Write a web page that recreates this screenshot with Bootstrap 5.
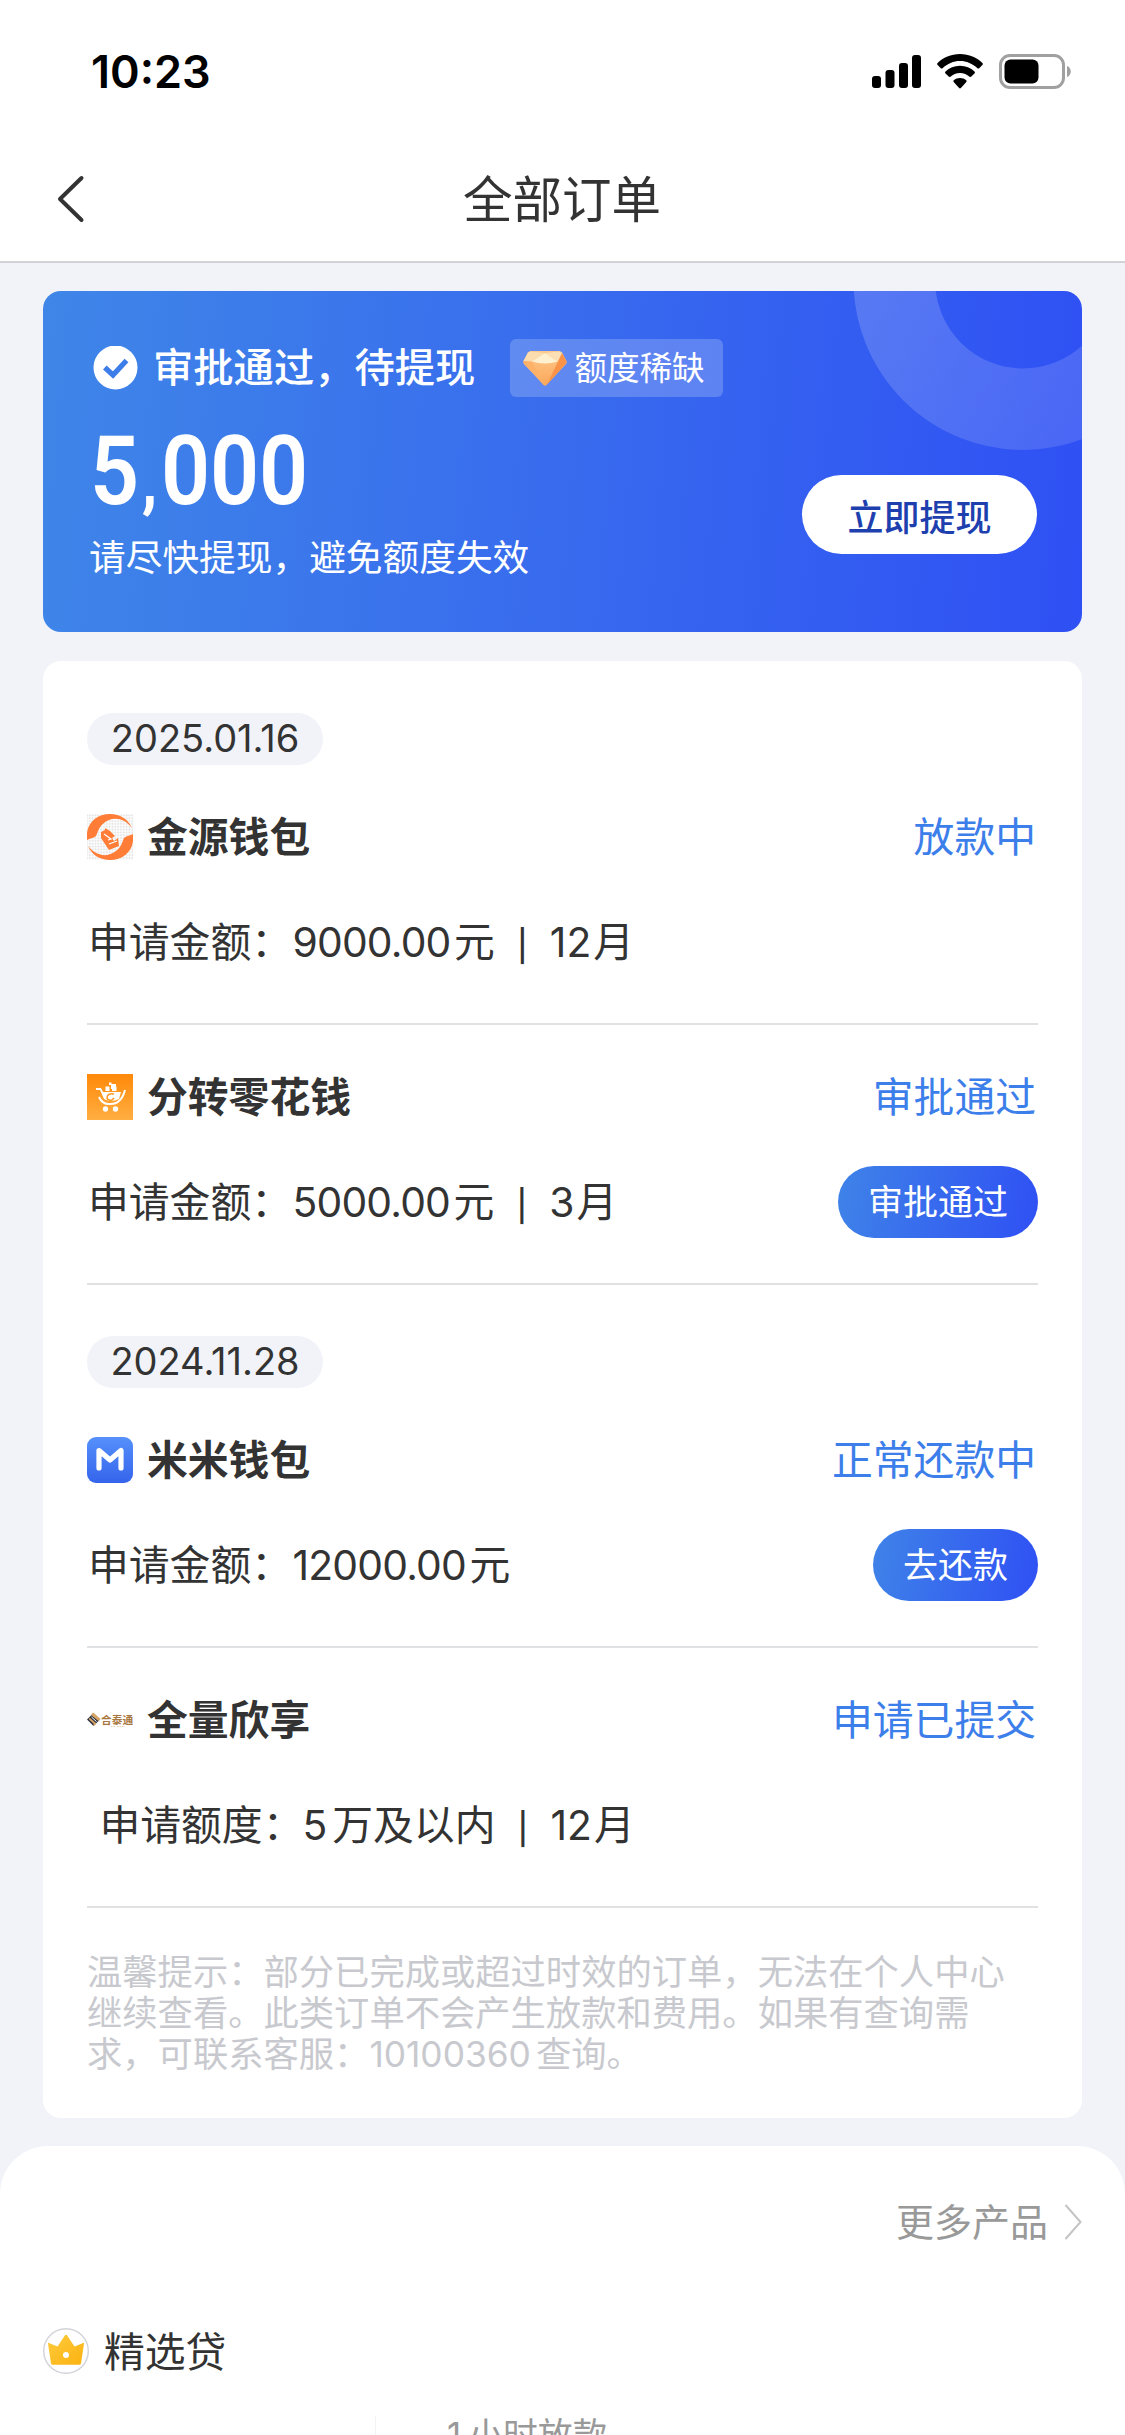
<!DOCTYPE html>
<html lang="zh-CN">
<head>
<meta charset="utf-8">
<meta name="viewport" content="width=device-width, initial-scale=1">
<title>全部订单</title>
<link rel="stylesheet" href="https://cdn.jsdelivr.net/npm/bootstrap@5.3.0/dist/css/bootstrap.min.css">
<style>
  html, body { height: 2435px; overflow: hidden; }
  body { background: #f2f3f8; color: #333; font-family: Inter, "Noto Sans CJK SC", sans-serif; font-size: 40.8px; line-height: 46px; width: 1125px; }
  svg { display: block; flex: none; }
  .statusbar { height: 136px; padding: 7px 53px 0 91px; }
  .clock { font-size: 45px; font-weight: 600; color: #000; }
  .sys { gap: 16px; }
  .topbar { height: 127px; border-bottom: 2px solid #d2d2d7; padding: 0 57px 0 56px; }
  .topbar-title { font-size: 49.5px; font-weight: 400; line-height: 60px; padding-top: 2px; }
  .side { width: 30px; }
  .banner { margin: 28px 43px 0; height: 341px; border-radius: 18px; background: linear-gradient(95deg, #3f86e8 0%, #386bee 50%, #2f50f4 100%); color: #fff; overflow: hidden; padding: 48px 45px 0 50px; font-family: "Noto Sans CJK SC", sans-serif; }
  .ring { top: 0; right: 0; }
  .banner-title { font-size: 40.3px; font-weight: 500; margin: -6px 0 0 15px; }
  .scarce { background: rgba(255,255,255,.2); border-radius: 6px; width: 213px; height: 58px; margin-left: 35px; padding-left: 13px; font-size: 32.6px; gap: 7px; }
  .scarce span { margin-top: -4px; }
  .sum { font-family: Roboto, sans-serif; font-weight: 600; font-size: 95.5px; line-height: 96px; transform: scaleX(.9); transform-origin: left; margin: 26px 0 0 -3px; }
  .comma { font-size: 70px; font-weight: 700; line-height: 1; margin: 0 4px 0 3px; }
  .hint { font-size: 36.7px; line-height: 46px; margin: 13px 0 0 -4px; }
  .withdraw { width: 235px; height: 79px; margin-top: 78px; background: #fff; color: #1e40ae; font-size: 36px; font-weight: 500; line-height: 72px; }
  .orders { margin: 29px 43px 0; height: 1457px; border-radius: 18px; background: #fff; padding: 0 44px; }
  .day { padding-top: 51px; }
  .day:first-child { padding-top: 52px; }
  .pill { width: 236px; height: 52px; background: #f2f3f8; font-size: 38px; line-height: 51px; }
  .order { padding: 49px 0 45px; border-bottom: 2px solid #e0e1e3; }
  .shop { font-weight: 700; margin-left: 14px; }
  .state { color: #3c7eea; padding-right: 2px; }
  .line2 { height: 72px; margin-top: 46px; padding-left: 1px; }
  .amt { letter-spacing: -.8px; margin: 0 3.5px 0 .5px; }
  .few { margin: 0 5px 0 -1px; }
  .mon { margin-right: 2px; }
  .bar { display: inline-block; width: 55px; text-align: center; font-size: 31px; line-height: 30px; font-weight: 500; }
  .act { height: 72px; padding: 0 30px; font-size: 35px; color: #fff; background: linear-gradient(100deg, #3f83e8, #2f50f4); }
  .note { margin: 44px -10px 0 0; font-size: 35.3px; line-height: 41px; color: #c8c9ce; }
  .tel { margin: 0 5px 0 0; }
  .more-panel { margin-top: 28px; height: 289px; background: #fff; border-radius: 48px 48px 0 0; padding: 53px 43px 0; }
  .more { color: #999; font-size: 38px; gap: 16px; }
  .picked { margin-top: 82px; }
  .picked span { margin-left: 15px; padding-top: 2px; }
  .teaser { color: #999; font-size: 34.8px; margin: 41px 0 0 332px; height: 20px; border-left: 1px solid #f3f3f3; padding-left: 71px; line-height: 38px; }
  .teaser span { margin-right: 7px; }
</style>
</head>
<body>
<div class="statusbar bg-white d-flex align-items-center justify-content-between">
  <span class="clock">10:23</span>
  <div class="sys d-flex align-items-center">
    <svg width="49" height="34" viewBox="0 0 49 34"><rect x="0" y="21" width="9" height="12" rx="3"/><rect x="13.500" y="15" width="9" height="18" rx="3"/><rect x="27" y="8" width="9" height="25" rx="3"/><rect x="40" y="0" width="9" height="33" rx="3"/></svg>
    <svg width="46" height="35" viewBox="0 0 46 35"><path d="M23 0C14 0 6 3.500 .6 9.100c-.6.6-.6 1.300 0 1.900l3.200 3.200c.5.500 1.200.5 1.800 0C10.400 9.700 16.500 7 23 7s12.600 2.700 17.400 7.200c.6.5 1.300.5 1.800 0l3.200-3.200c.6-.6.6-1.300 0-1.900C40 3.500 32 0 23 0z"/><path d="M23 11.800c-5.600 0-10.700 2.200-14.500 5.700-.6.5-.6 1.300 0 1.900l3.200 3.200c.5.500 1.200.5 1.800.1 2.500-2.300 5.800-3.700 9.500-3.700s7 1.400 9.500 3.700c.6.400 1.300.4 1.800-.1l3.200-3.200c.6-.6.6-1.400 0-1.900-3.800-3.500-8.900-5.700-14.500-5.700z"/><path d="M23 24c-2.400 0-4.500.8-6.200 2.200-.6.500-.6 1.200-.1 1.700l5.400 6.200c.5.600 1.300.6 1.800 0l5.400-6.200c.5-.5.5-1.200-.1-1.700C27.500 24.800 25.400 24 23 24z"/></svg>
    <svg width="73" height="35" viewBox="0 0 73 35"><rect x="1.500" y="1.500" width="63" height="32" rx="9.500" fill="#fff" stroke="#a0a0a0" stroke-width="3"/><rect x="5.500" y="5.500" width="34" height="24" rx="6"/><path d="M68 12c5 1.500 5 9.500 0 11z" fill="#a0a0a0"/></svg>
  </div>
</div>
<header class="topbar bg-white d-flex align-items-center justify-content-between">
  <div class="side"><svg width="30" height="48" viewBox="0 0 30 48"><path d="M25.500 3 4 24l21.500 21" fill="none" stroke="#333" stroke-width="4" stroke-linecap="round" stroke-linejoin="round"/></svg></div>
  <h1 class="topbar-title mb-0">全部订单</h1>
  <div class="side"></div>
</header>

<section class="banner position-relative">
  <svg class="ring position-absolute" width="235" height="165" viewBox="847 291 235 165"><defs><linearGradient id="rg" x1="0" y1="0" x2="1" y2="1"><stop offset="0" stop-color="#fff" stop-opacity=".19"/><stop offset="1" stop-color="#fff" stop-opacity=".12"/></linearGradient></defs><circle cx="1023" cy="280.500" r="128.700" fill="none" stroke="url(#rg)" stroke-width="81.500"/></svg>
  <div class="d-flex align-items-center">
    <svg width="45" height="45" viewBox="0 0 45 45"><circle cx="22.500" cy="21.500" r="22" fill="#fff"/><path d="M11.800 21.500l8.200 7.500 13.500-14.500" fill="none" stroke="#3d7de9" stroke-width="5.200"/></svg>
    <span class="banner-title">审批通过，待提现</span>
    <span class="scarce d-flex align-items-center">
      <svg width="44" height="35" viewBox="0 0 44 35"><defs><linearGradient id="dg" x1="0" y1="0" x2="0" y2="1"><stop offset="0" stop-color="#fcc98b"/><stop offset="1" stop-color="#fda75a"/></linearGradient></defs><path d="M8 0h28q2 0 3 1.500l4.500 8.500q.6 1.500-.5 3L23.500 34q-1.500 1.500-3 0L1 13q-1.100-1.500-.5-3L5 1.500Q6 0 8 0z" fill="url(#dg)"/><path d="M8 .5 22 2 9 11 .5 10 5 1.500z" fill="#fbdcae"/><path d="M22 2 9 10.500q13 4 26 0z" fill="#fff0cf"/><path d="M22 2 36 .5l3 1.500-4 9z" fill="#fddfb5"/><path d="M35 10.500 39 2l4.500 8.500-.5 2L24 33.500z" fill="#f99348"/><path d="M9 10.500 22 34 1 13l-.5-3z" fill="#fdb169"/></svg>
      <span>额度稀缺</span>
    </span>
  </div>
  <div class="d-flex justify-content-between">
    <div>
      <div class="sum">5<span class="comma">,</span>000</div>
      <div class="hint">请尽快提现，避免额度失效</div>
    </div>
    <button class="withdraw btn rounded-pill border-0 p-0">立即提现</button>
  </div>
</section>

<main class="orders">
  <div class="day">
    <div class="pill rounded-pill text-center">2025.01.16</div>
    <div class="order">
      <div class="d-flex align-items-center">
        <svg width="46" height="46" viewBox="0 0 46 46"><defs><pattern id="ck" width="4" height="4" patternUnits="userSpaceOnUse" patternTransform="rotate(45)"><rect width="2" height="2" fill="#e9e9e9"/><rect x="2" y="2" width="2" height="2" fill="#e9e9e9"/></pattern></defs><rect width="46" height="46" fill="url(#ck)"/><path d="M0 26C-2 10 9 0 23 0c10 0 18 5 22 14C37 4 26 2 17 9c-6 5-6 9-8 13-2 2-5 2-9 4z" fill="#ff7d36"/><path d="M46 20c2 16-9 26-23 26C13 46 5 41 1 32c8 10 19 12 28 5 6-5 6-9 8-13 2-2 5-2 9-4z" fill="#ff7d36"/><path d="M14 18l4-2v-2l5 3 5 5-3 2 2 3 4-3 1 8-10 4-8-12z" fill="#ff7d36"/><path d="M17 20l7 5-3 1M22 30l8-3" fill="none" stroke="#fff" stroke-width="1.300"/></svg>
        <span class="shop">金源钱包</span><span class="state ms-auto">放款中</span>
      </div>
      <div class="line2 d-flex align-items-center"><div>申请金额：<span class="amt">9000.00</span>元<span class="bar">|</span><span class="mon">12</span>月</div></div>
    </div>
    <div class="order">
      <div class="d-flex align-items-center">
        <svg width="46" height="46" viewBox="0 0 46 46"><defs><linearGradient id="og" x1="0" y1="0" x2="0" y2="1"><stop offset="0" stop-color="#ff8909"/><stop offset="1" stop-color="#ffae42"/></linearGradient></defs><rect width="46" height="46" fill="url(#og)"/><g fill="#fff"><path d="M9 14h5l2 4h18l-2 7q-8 4-15 0l-4-9H9z"/><rect x="18.500" y="12.500" width="4" height="4.500"/><rect x="24" y="10" width="5" height="5"/><rect x="25" y="12.500" width="4.500" height="4.500"/><rect x="22" y="8.500" width="2.500" height="2.500"/><circle cx="18.500" cy="35" r="2.700"/><circle cx="28.500" cy="35" r="2.700"/></g><path d="M12 23q3 7 10 7 12 1 16-14" fill="none" stroke="#fff" stroke-width="2"/><path d="M27 20q-7-1-7 4 1 3 5 2l2-2" fill="none" stroke="#ff9a20" stroke-width="1.500"/></svg>
        <span class="shop">分转零花钱</span><span class="state ms-auto">审批通过</span>
      </div>
      <div class="line2 d-flex align-items-center justify-content-between"><div>申请金额：<span class="amt">5000.00</span>元<span class="bar">|</span><span class="mon">3</span>月</div><button class="act btn rounded-pill border-0">审批通过</button></div>
    </div>
  </div>
  <div class="day">
    <div class="pill rounded-pill text-center">2024.11.28</div>
    <div class="order">
      <div class="d-flex align-items-center">
        <svg width="46" height="46" viewBox="0 0 46 46"><defs><linearGradient id="mg" x1="0" y1="0" x2="0" y2="1"><stop offset="0" stop-color="#5590fb"/><stop offset="1" stop-color="#3564ec"/></linearGradient></defs><rect width="46" height="46" rx="9" fill="url(#mg)"/><path d="M12 31V13.500L23 23l11-9.500V31" fill="none" stroke="#fff" stroke-width="5.200" stroke-linecap="round" stroke-linejoin="round"/></svg>
        <span class="shop">米米钱包</span><span class="state ms-auto">正常还款中</span>
      </div>
      <div class="line2 d-flex align-items-center justify-content-between"><div>申请金额：<span class="amt">12000.00</span>元</div><button class="act btn rounded-pill border-0">去还款</button></div>
    </div>
    <div class="order">
      <div class="d-flex align-items-center">
        <svg width="46" height="46" viewBox="0 0 46 46"><path d="M6.500 16 13 22.500 6.500 29 0 22.500z" fill="#2e3440"/><path d="M6 15.500l7.500 6.500-2 2-7.500-6zM2.500 20.500l7 6-2.500 2.500-1-1 1-1-5-4.500z" fill="#d9a566"/><path d="M4.500 20l5 4.500" stroke="#fff" stroke-width="1"/><text x="14" y="26.500" font-size="10.700" font-weight="700" fill="#a8773f" font-family="Noto Sans CJK SC, sans-serif">合泰通</text><path d="M24 29.500h4m2 0h8" stroke="#e4d3bd" stroke-width="1" stroke-dasharray="1.500 1"/></svg>
        <span class="shop">全量欣享</span><span class="state ms-auto">申请已提交</span>
      </div>
      <div class="line2 d-flex align-items-center"><div>&nbsp;申请额度：<span class="few">5</span>万及以内<span class="bar">|</span><span class="mon">12</span>月</div></div>
    </div>
  </div>
  <p class="note mb-0">温馨提示：部分已完成或超过时效的订单，无法在个人中心<br>继续查看。此类订单不会产生放款和费用。如果有查询需<br>求，可联系客服：<span class="tel">10100360</span>查询。</p>
</main>

<section class="more-panel">
  <div class="more d-flex align-items-center justify-content-end">
    <span>更多产品</span>
    <svg width="18" height="36" viewBox="0 0 18 36"><path d="M1.500 1 16.500 18 1.500 35" fill="none" stroke="#c4c4c6" stroke-width="2"/></svg>
  </div>
  <div class="picked d-flex align-items-center">
    <svg width="46" height="46" viewBox="0 0 46 46"><defs><linearGradient id="cg" x1="0" y1="0" x2="1" y2="1"><stop offset="0" stop-color="#ffcb3d"/><stop offset="1" stop-color="#fbb210"/></linearGradient></defs><circle cx="23" cy="23" r="22.300" fill="#fff" stroke="#d3d3da" stroke-width="1.400"/><path d="M5 15.500q-.3-1 .8-.6l8.700 3.600L22 7.300q1-1.300 2 0l7.500 11.200 8.700-3.600q1.100-.4.800.6L38 35.500q-.3 1.200-1.500 1.200h-27q-1.200 0-1.500-1.200z" fill="url(#cg)"/><circle cx="23" cy="27" r="3" fill="#fff"/></svg>
    <span>精选贷</span>
  </div>
  <div class="teaser"><span>1</span>小时放款</div>
</section>
<script src="https://cdn.jsdelivr.net/npm/bootstrap@5.3.0/dist/js/bootstrap.bundle.min.js"></script>
</body>
</html>
